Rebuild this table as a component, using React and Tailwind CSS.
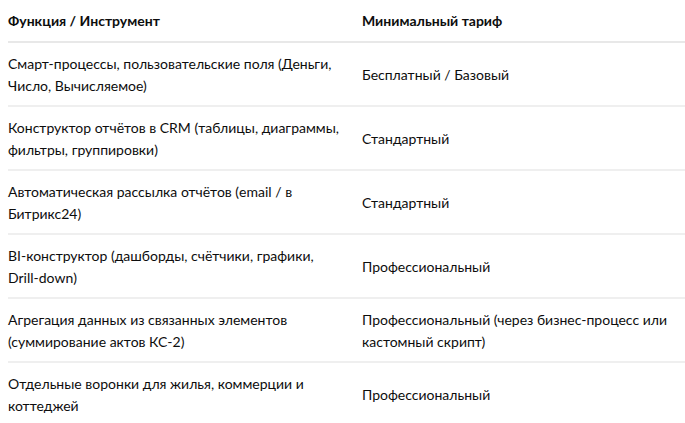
import React from 'react';

const rows = [
  ['Смарт-процессы, пользовательские поля (Деньги, Число, Вычисляемое)', 'Бесплатный / Базовый'],
  ['Конструктор отчётов в CRM (таблицы, диаграммы, фильтры, группировки)', 'Стандартный'],
  ['Автоматическая рассылка отчётов (email / в Битрикс24)', 'Стандартный'],
  ['BI-конструктор (дашборды, счётчики, графики, Drill-down)', 'Профессиональный'],
  ['Агрегация данных из связанных элементов (суммирование актов КС-2)', 'Профессиональный (через бизнес-процесс или кастомный скрипт)'],
  ['Отдельные воронки для жилья, коммерции и коттеджей', 'Профессиональный'],
];

export default function App() {
  return (
    <div className="w-[685px] h-[423px] overflow-hidden bg-white pl-2 text-[#0d0d0d] text-[14px] leading-[22px]" style={{ fontFamily: 'Lato, "Open Sans", sans-serif' }}>
      <table className="w-full border-collapse">
        <thead>
          <tr className="border-b-2 border-[#e8e8e8]">
            <th className="w-[354px] pt-[10px] pb-[9px] pr-4 text-left font-bold align-middle">Функция / Инструмент</th>
            <th className="pt-[10px] pb-[9px] pr-2 text-left font-bold align-middle">Минимальный тариф</th>
          </tr>
        </thead>
        <tbody>
          {rows.map(([a, b], i) => (
            <tr key={i} className={i < rows.length - 1 ? 'border-b-2 border-[#efefef]' : ''}>
              <td className="pt-[10px] pb-[8px] pr-5 align-middle">{a}</td>
              <td className="pt-[10px] pb-[8px] pr-2 align-middle">{b}</td>
            </tr>
          ))}
        </tbody>
      </table>
    </div>
  );
}
